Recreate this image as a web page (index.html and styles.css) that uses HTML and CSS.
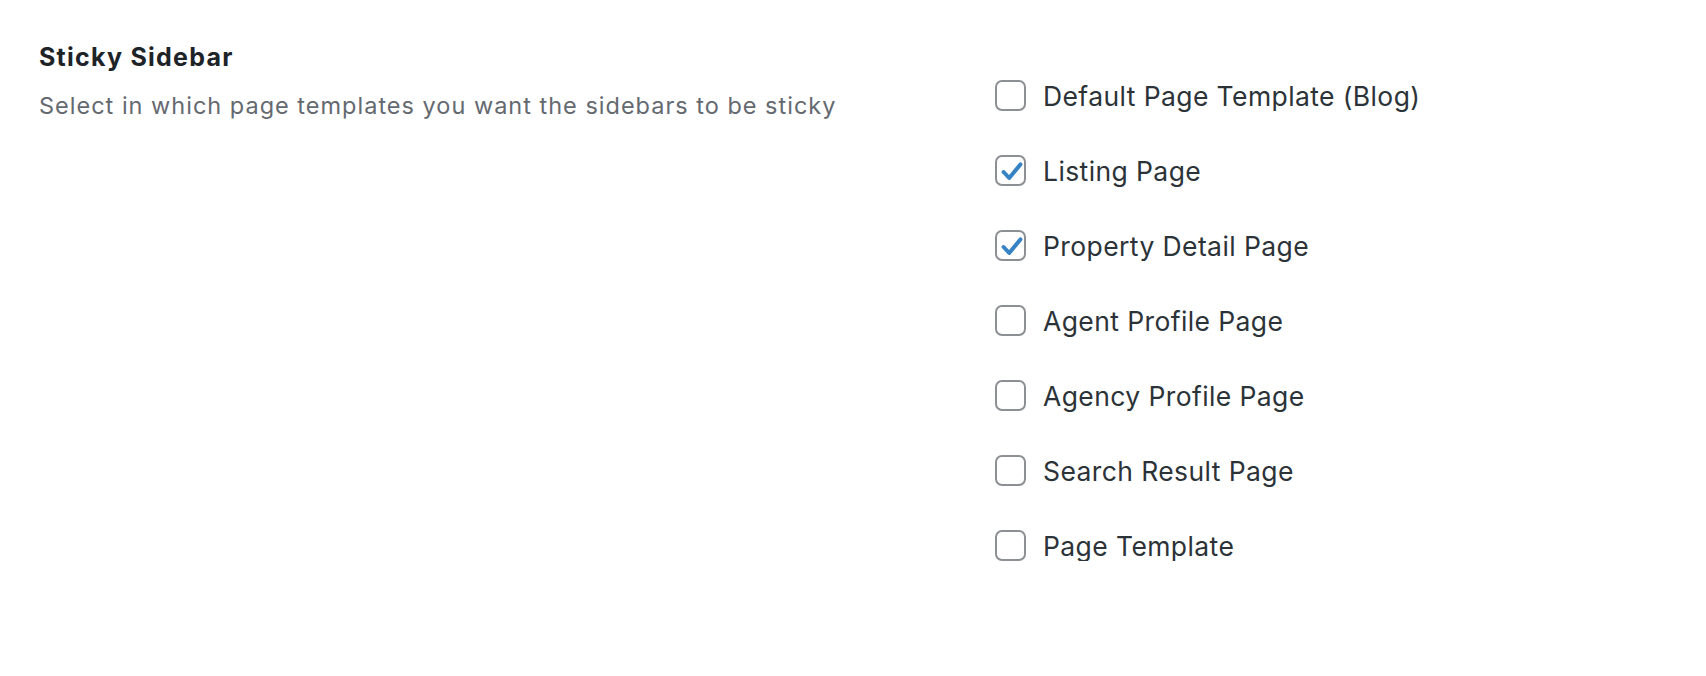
FILE: index.html
```html
<!DOCTYPE html>
<html>
<head>
<meta charset="utf-8">
<link rel="stylesheet" href="styles.css">
</head>
<body>
<div class="setting">
  <div class="info">
    <h2 class="title">Sticky Sidebar</h2>
    <p class="desc">Select in which page templates you want the sidebars to be sticky</p>
  </div>
  <ul class="options">
    <li class="option"><span class="box"></span><span class="label">Default Page Template (Blog)</span></li>
    <li class="option"><span class="box checked"><svg viewBox="0 0 27 27"><path d="M6.6 15 L12.2 21 L23.4 7.4" /></svg></span><span class="label">Listing Page</span></li>
    <li class="option"><span class="box checked"><svg viewBox="0 0 27 27"><path d="M6.6 15 L12.2 21 L23.4 7.4" /></svg></span><span class="label">Property Detail Page</span></li>
    <li class="option"><span class="box"></span><span class="label">Agent Profile Page</span></li>
    <li class="option"><span class="box"></span><span class="label">Agency Profile Page</span></li>
    <li class="option"><span class="box"></span><span class="label">Search Result Page</span></li>
    <li class="option"><span class="box"></span><span class="label">Page Template</span></li>
  </ul>
</div>
</body>
</html>
```
FILE: styles.css
```css
html, body {
  margin: 0;
  padding: 0;
  background: #ffffff;
}
body {
  font-family: Inter, "Noto Sans", sans-serif;
}
.setting {
  display: flex;
  padding: 0 0 0 39px;
}
.info {
  width: 956px;
  flex: none;
  padding-top: 41px;
}
.title {
  margin: 0;
  font-size: 25px;
  line-height: 32px;
  font-weight: 700;
  letter-spacing: 1.25px;
  color: #1d2327;
}
.desc {
  margin: 18px 0 0 0;
  font-size: 23.5px;
  line-height: 30px;
  letter-spacing: 1px;
  color: #646970;
}
.options {
  list-style: none;
  margin: 0;
  padding: 80px 0 0 0;
  display: flex;
  flex-direction: column;
  gap: 44px;
}
.option {
  display: flex;
  align-items: center;
  height: 31px;
}
.box {
  box-sizing: border-box;
  width: 31px;
  height: 31px;
  border: 2px solid #8c8f94;
  border-radius: 7px;
  background: #fff;
  display: flex;
  align-items: center;
  justify-content: center;
  flex: none;
}
.box svg {
  width: 27px;
  height: 27px;
}
.box svg path {
  fill: none;
  stroke: #3582c4;
  stroke-width: 4;
  stroke-linecap: round;
  stroke-linejoin: round;
}
.label {
  margin-left: 17px;
  padding-top: 2px;
  font-size: 26.5px;
  line-height: 31px;
  letter-spacing: 0.4px;
  color: #2c3338;
}
```
